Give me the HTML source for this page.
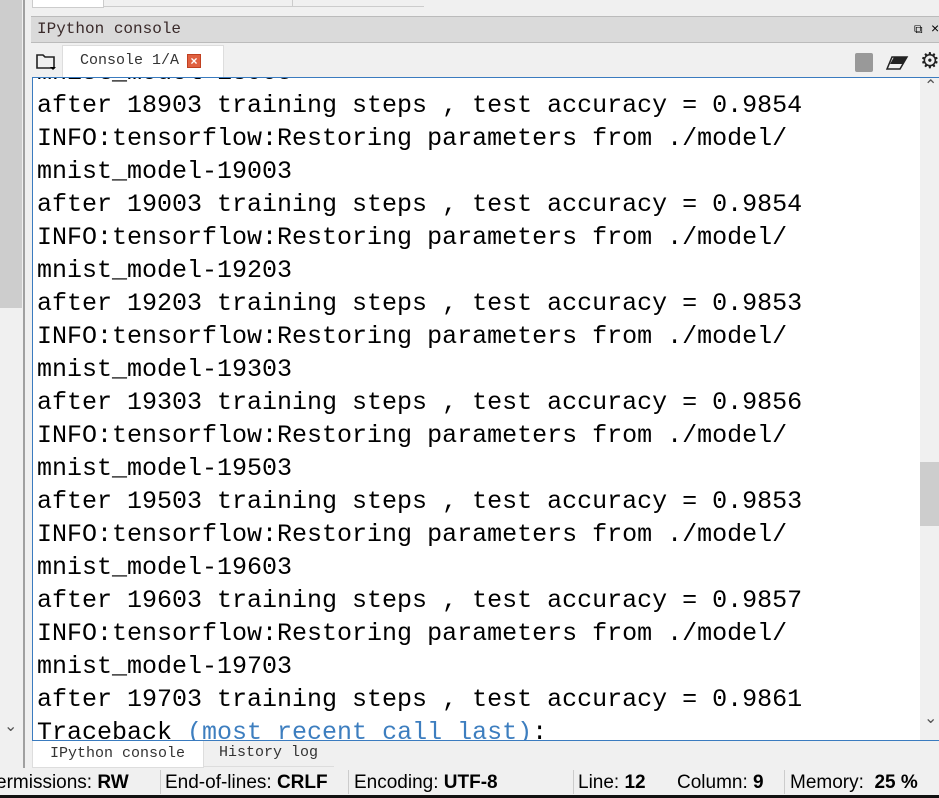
<!DOCTYPE html>
<html><head><meta charset="utf-8"><style>
*{margin:0;padding:0;box-sizing:border-box}
body{width:939px;height:798px;overflow:hidden;background:#f0f0f0;position:relative;font-family:"Liberation Sans",sans-serif}
.a{position:absolute}
.ser{font-family:"Liberation Mono",monospace;color:#222}
.line{position:absolute;left:37px;font-size:25px;line-height:33px;white-space:pre;color:#000;font-family:"Liberation Mono","DejaVu Sans Mono",monospace}
.sb span{position:absolute;top:0;font-size:19px;color:#000}
</style></head><body>
<div class="a" style="left:0;top:0;width:23px;height:745px;background:#f0f0f0"></div>
<div class="a" style="left:0;top:0;width:22px;height:308px;background:#cdcdcd"></div>
<div class="a" style="left:23px;top:0;width:2px;height:768px;background:#a0a0a0"></div>
<div class="a" style="left:4px;top:716px;font-size:16px;color:#555">&#8964;</div>
<div class="a" style="left:32px;top:0;width:72px;height:8px;background:#fff;border:1px solid #ccc;border-top:none"></div>
<div class="a" style="left:104px;top:6px;width:320px;height:1px;background:#ccc"></div>
<div class="a" style="left:292px;top:0;width:1px;height:6px;background:#ccc"></div>
<div class="a" style="left:31px;top:16px;width:908px;height:27px;background:#dadada;border-top:1px solid #bbb;border-bottom:1px solid #bbb"></div>
<div class="a ser" style="left:37px;top:20px;font-size:16px;color:#3a2a2a">IPython console</div>
<div class="a" style="left:914px;top:22px;font-size:12px;color:#000">&#x29C9;</div>
<div class="a" style="left:931px;top:20px;font-size:14px;color:#000">×</div>
<svg class="a" style="left:36px;top:52px" width="22" height="20" viewBox="0 0 22 20"><path d="M1 3h6l2 2h9v11H1z" fill="none" stroke="#222" stroke-width="1.6"/><path d="M14 15h6l-3 3z" fill="#000"/></svg>
<div class="a" style="left:62px;top:45px;width:162px;height:33px;background:#fff;border:1px solid #ddd;border-bottom:none"></div>
<div class="a ser" style="left:80px;top:52px;font-size:15px;color:#333">Console 1/A</div>
<div class="a" style="left:187px;top:54px;width:14px;height:14px;background:#e06040;border:1px solid #c04020;color:#fff;font-size:12px;line-height:12px;text-align:center;font-weight:bold">×</div>
<div class="a" style="left:855px;top:53px;width:18px;height:19px;background:#999;border-radius:2px"></div>
<svg class="a" style="left:885px;top:53px" width="24" height="18" viewBox="0 0 24 18"><path d="M7 4h15l-7 12H2z" fill="none" stroke="#222" stroke-width="1.5"/><path d="M9 4h13l-4 7H5z" fill="#222"/></svg>
<div class="a" style="left:920px;top:48px;font-size:22px;color:#222">&#9881;</div>
<div class="a" style="left:32px;top:77px;width:907px;height:664px;background:#fff;border-left:1px solid #3a7bbf;border-top:1px solid #3a7bbf;border-bottom:1px solid #3a7bbf;overflow:hidden">
<div style="position:absolute;left:-33px;top:-60px;width:940px;height:760px">
<div class="line" style="top:38px">mnist_model-18903</div>
<div class="line" style="top:71px">after 18903 training steps , test accuracy = 0.9854</div>
<div class="line" style="top:104px">INFO:tensorflow:Restoring parameters from ./model/</div>
<div class="line" style="top:137px">mnist_model-19003</div>
<div class="line" style="top:170px">after 19003 training steps , test accuracy = 0.9854</div>
<div class="line" style="top:203px">INFO:tensorflow:Restoring parameters from ./model/</div>
<div class="line" style="top:236px">mnist_model-19203</div>
<div class="line" style="top:269px">after 19203 training steps , test accuracy = 0.9853</div>
<div class="line" style="top:302px">INFO:tensorflow:Restoring parameters from ./model/</div>
<div class="line" style="top:335px">mnist_model-19303</div>
<div class="line" style="top:368px">after 19303 training steps , test accuracy = 0.9856</div>
<div class="line" style="top:401px">INFO:tensorflow:Restoring parameters from ./model/</div>
<div class="line" style="top:434px">mnist_model-19503</div>
<div class="line" style="top:467px">after 19503 training steps , test accuracy = 0.9853</div>
<div class="line" style="top:500px">INFO:tensorflow:Restoring parameters from ./model/</div>
<div class="line" style="top:533px">mnist_model-19603</div>
<div class="line" style="top:566px">after 19603 training steps , test accuracy = 0.9857</div>
<div class="line" style="top:599px">INFO:tensorflow:Restoring parameters from ./model/</div>
<div class="line" style="top:632px">mnist_model-19703</div>
<div class="line" style="top:665px">after 19703 training steps , test accuracy = 0.9861</div>
<div class="line" style="top:698px">Traceback <span style="color:#3d7ebf">(most recent call last)</span>:</div>
</div>
<div class="a" style="left:887px;top:0;width:20px;height:664px;background:#f0f0f0"></div>
<div class="a" style="left:887px;top:384px;width:20px;height:64px;background:#cdcdcd"></div>
<div class="a" style="left:891px;top:-2px;font-size:16px;color:#555">&#8963;</div>
<div class="a" style="left:891px;top:630px;font-size:16px;color:#555">&#8964;</div>
</div>
<div class="a" style="left:32px;top:741px;width:172px;height:27px;background:#fff;border:1px solid #ddd;border-top:none"></div>
<div class="a ser" style="left:50px;top:745px;font-size:15px;color:#333">IPython console</div>
<div class="a ser" style="left:219px;top:744px;font-size:15px;color:#333">History log</div>
<div class="a" style="left:204px;top:766px;width:130px;height:1px;background:#ddd"></div>
<div class="a sb" style="left:0;top:772px;width:939px;height:22px">
<span style="left:-4px">ermissions: <b>RW</b></span>
<span style="left:165px">End-of-lines: <b>CRLF</b></span>
<span style="left:354px">Encoding: <b>UTF-8</b></span>
<span style="left:578px">Line: <b>12</b></span>
<span style="left:677px">Column: <b>9</b></span>
<span style="left:790px">Memory: &nbsp;<b>25 %</b></span>
</div>
<div class="a" style="left:160px;top:770px;width:1px;height:24px;background:#ccc"></div>
<div class="a" style="left:348px;top:770px;width:1px;height:24px;background:#ccc"></div>
<div class="a" style="left:573px;top:770px;width:1px;height:24px;background:#ccc"></div>
<div class="a" style="left:784px;top:770px;width:1px;height:24px;background:#ccc"></div>
<div class="a" style="left:0;top:795px;width:939px;height:3px;background:#111"></div>
</body></html>
